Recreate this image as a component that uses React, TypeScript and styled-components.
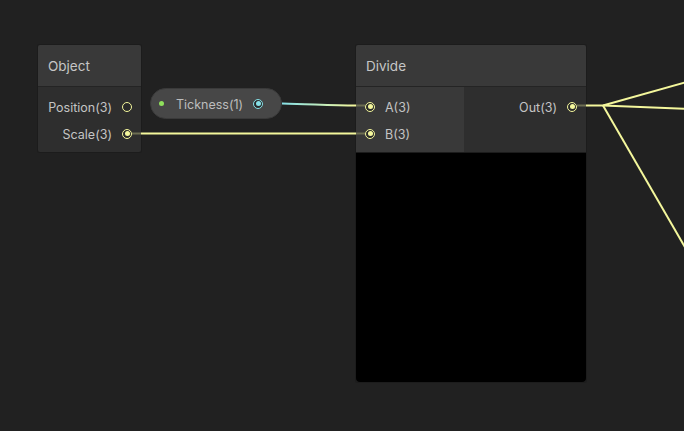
import styled, { createGlobalStyle } from "styled-components";

const GlobalStyle = createGlobalStyle`
  html, body {
    margin: 0;
    padding: 0;
    background: #212121;
  }
  body {
    font-family: Inter, "Noto Sans", sans-serif;
  }
`;

const YELLOW = "#f4f79c";
const CYAN = "#86e0e6";

const Canvas = styled.div`
  position: relative;
  width: 684px;
  height: 431px;
  overflow: hidden;
  background: #212121;
`;

const Node = styled.div<{ $x: number; $y: number; $w: number }>`
  position: absolute;
  left: ${(p) => p.$x}px;
  top: ${(p) => p.$y}px;
  width: ${(p) => p.$w}px;
  display: flex;
  flex-direction: column;
  border-radius: 2px;
  overflow: hidden;
  box-shadow: 0 0 0 1px #1c1c1c;
`;

const Header = styled.div`
  height: 41px;
  display: flex;
  align-items: center;
  padding-left: 10px;
  background: #393939;
  border-bottom: 1px solid #242424;
  color: #c6c6c6;
  font-size: 13.5px;
`;

const Body = styled.div`
  display: flex;
  height: 65px;
`;

const Column = styled.div<{ $bg: string; $w?: number; $align: "start" | "end" }>`
  display: flex;
  flex-direction: column;
  padding-top: 6px;
  background: ${(p) => p.$bg};
  width: ${(p) => (p.$w ? `${p.$w}px` : "auto")};
  flex: ${(p) => (p.$w ? "none" : "1")};
  align-items: ${(p) => (p.$align === "end" ? "flex-end" : "flex-start")};
`;

const Row = styled.div<{ $side: "in" | "out" }>`
  height: 27px;
  display: flex;
  align-items: center;
  gap: 10px;
  padding: ${(p) => (p.$side === "in" ? "0 0 0 9px" : "0 9px 0 0")};
  color: #c4c4c4;
  font-size: 12.5px;
`;

const Label = styled.span`
  padding-top: 2px;
`;

const Port = styled.span<{ $color: string; $on?: boolean }>`
  position: relative;
  width: 10px;
  height: 10px;
  box-sizing: border-box;
  border-radius: 50%;
  border: 1.5px solid ${(p) => p.$color};
  background: #2a2a2a;
  flex: none;
  &::after {
    content: "";
    display: ${(p) => (p.$on ? "block" : "none")};
    position: absolute;
    left: 50%;
    top: 50%;
    width: 5px;
    height: 5px;
    margin: -2.5px 0 0 -2.5px;
    border-radius: 50%;
    background: ${(p) => p.$color};
  }
`;

const Preview = styled.div`
  height: 229px;
  background: #000;
  border-top: 1px solid #1c1c1c;
  border-radius: 0 0 4px 4px;
`;

const Pill = styled.div`
  position: absolute;
  left: 150px;
  top: 88px;
  width: 132px;
  height: 31px;
  box-sizing: border-box;
  border-radius: 16px;
  background: #474747;
  border: 1px solid #3a3a3a;
  display: flex;
  align-items: center;
  padding: 0 0 0 8px;
  color: #bdbdbd;
  font-size: 12.5px;
`;

const Dot = styled.span`
  width: 5px;
  height: 5px;
  border-radius: 50%;
  background: #8fe05c;
  margin-right: 12px;
`;

const PillLabel = styled.span`
  margin-right: 10px;
  padding-top: 2px;
`;

const Wires = styled.svg`
  position: absolute;
  left: 0;
  top: 0;
  pointer-events: none;
  z-index: 2;
`;

export default function App() {
  return (
    <>
      <GlobalStyle />
      <Canvas>
        <Node $x={38} $y={45} $w={103}>
          <Header>Object</Header>
          <Body>
            <Column $bg="#2e2e2e" $align="end">
              <Row $side="out">
                <Label>Position(3)</Label>
                <Port $color={YELLOW} />
              </Row>
              <Row $side="out">
                <Label>Scale(3)</Label>
                <Port $color={YELLOW} $on />
              </Row>
            </Column>
          </Body>
        </Node>

        <Pill>
          <Dot />
          <PillLabel>Tickness(1)</PillLabel>
          <Port $color={CYAN} $on />
        </Pill>

        <Node $x={356} $y={45} $w={230}>
          <Header>Divide</Header>
          <Body>
            <Column $bg="#393939" $w={108} $align="start">
              <Row $side="in">
                <Port $color={YELLOW} $on />
                <Label>A(3)</Label>
              </Row>
              <Row $side="in">
                <Port $color={YELLOW} $on />
                <Label>B(3)</Label>
              </Row>
            </Column>
            <Column $bg="#2e2e2e" $align="end">
              <Row $side="out">
                <Label>Out(3)</Label>
                <Port $color={YELLOW} $on />
              </Row>
            </Column>
          </Body>
          <Preview />
        </Node>

        <Wires width={684} height={431} viewBox="0 0 684 431">
          <defs>
            <linearGradient id="tick" x1="282" y1="0" x2="355" y2="0" gradientUnits="userSpaceOnUse">
              <stop offset="0" stopColor={CYAN} />
              <stop offset="1" stopColor={YELLOW} />
            </linearGradient>
          </defs>
          <g fill="none" strokeWidth={2}>
            <line x1={132} y1={133.5} x2={141} y2={133.5} stroke="#6d6e52" />
            <line x1={141} y1={133.5} x2={356} y2={133.5} stroke={YELLOW} />
            <path d="M282 103.5 C 310 104, 330 105.5, 356 105.5" stroke="url(#tick)" />
            <line x1={356} y1={105.5} x2={365} y2={105.5} stroke="#6d6e52" />
            <line x1={356} y1={133.5} x2={365} y2={133.5} stroke="#6d6e52" />
            <line x1={577} y1={105.5} x2={586} y2={105.5} stroke="#6d6e52" />
            <line x1={586} y1={105.5} x2={603} y2={105.5} stroke={YELLOW} />
            <path d="M603 105.5 L 690 81" stroke={YELLOW} />
            <path d="M603 105.5 L 690 109" stroke={YELLOW} />
            <path d="M603 105.5 L 690 256" stroke={YELLOW} />
          </g>
        </Wires>
      </Canvas>
    </>
  );
}
